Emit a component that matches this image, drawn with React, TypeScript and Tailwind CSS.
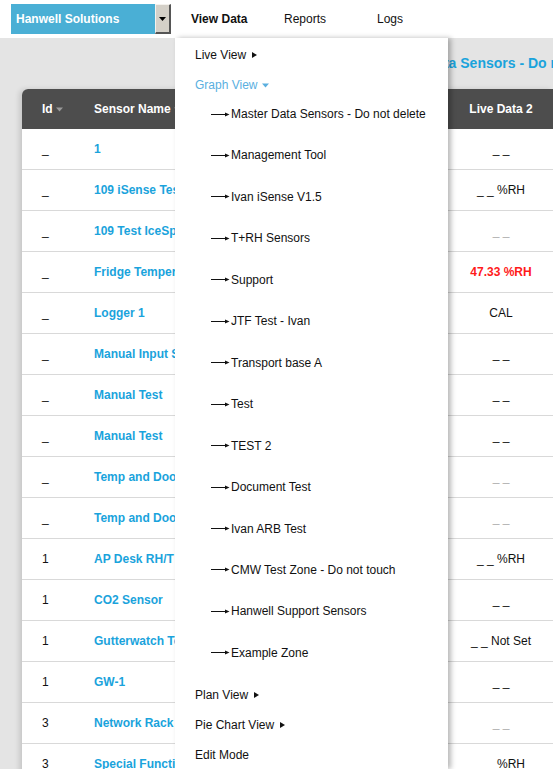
import React from 'react';

type Row = {
  id: string;
  name: string;
  live: string;
  tone?: 'muted' | 'alert';
};

const rows: Row[] = [
  { id: '_', name: '1', live: '_ _' },
  { id: '_', name: '109 iSense Test', live: '_ _ %RH' },
  { id: '_', name: '109 Test IceSpy', live: '_ _', tone: 'muted' },
  { id: '_', name: 'Fridge Temperature', live: '47.33 %RH', tone: 'alert' },
  { id: '_', name: 'Logger 1', live: 'CAL' },
  { id: '_', name: 'Manual Input Sensor', live: '_ _' },
  { id: '_', name: 'Manual Test', live: '_ _' },
  { id: '_', name: 'Manual Test', live: '_ _' },
  { id: '_', name: 'Temp and Door Sensor', live: '_ _', tone: 'muted' },
  { id: '_', name: 'Temp and Door Sensor', live: '_ _', tone: 'muted' },
  { id: '1', name: 'AP Desk RH/T Sensor', live: '_ _ %RH' },
  { id: '1', name: 'CO2 Sensor', live: '_ _' },
  { id: '1', name: 'Gutterwatch Test', live: '_ _ Not Set' },
  { id: '1', name: 'GW-1', live: '_ _' },
  { id: '3', name: 'Network Rack', live: '_ _', tone: 'muted' },
  { id: '3', name: 'Special Function', live: '_ _ %RH' },
];

const zones = [
  'Master Data Sensors - Do not delete',
  'Management Tool',
  'Ivan iSense V1.5',
  'T+RH Sensors',
  'Support',
  'JTF Test - Ivan',
  'Transport base A',
  'Test',
  'TEST 2',
  'Document Test',
  'Ivan ARB Test',
  'CMW Test Zone - Do not touch',
  'Hanwell Support Sensors',
  'Example Zone',
];

const SortCaret = () => (
  <svg width="7" height="5" viewBox="0 0 7 5" className="ml-[3px] inline-block">
    <path d="M0 0.5h7L3.5 4.5z" fill="#9a9a9a" />
  </svg>
);

const RightCaret = () => (
  <svg width="5" height="6" viewBox="0 0 5 6" className="ml-[6px] inline-block">
    <path d="M0 0l5 3-5 3z" fill="#111" />
  </svg>
);

const LongArrow = () => (
  <svg width="19" height="7" viewBox="0 0 19 7" className="mr-[1px] shrink-0">
    <line x1="0" y1="3.5" x2="15" y2="3.5" stroke="#111" strokeWidth="1" />
    <path d="M14 1.5L18.5 3.5L14 5.5z" fill="#111" />
  </svg>
);

const liveClass = (tone?: Row['tone']) => {
  switch (tone) {
    case 'muted':
      return 'text-[#b0b0b0]';
    case 'alert':
      return 'text-[#ff1a1a] font-bold';
    default:
      return 'text-[#111]';
  }
};

const ViewDataMenu: React.FC = () => (
  <div className="absolute left-[175px] top-[38px] bottom-0 w-[273px] bg-white pt-[1px] shadow-[3px_0_5px_rgba(0,0,0,0.28)] text-[12px] text-[#111]">
    <div className="h-[31px] flex items-center pl-[20px]">
      Live View <RightCaret />
    </div>
    <div className="h-[30px] flex items-center pl-[20px] text-[#5aafdf]">
      Graph View
      <svg width="7" height="5" viewBox="0 0 7 5" className="ml-[5px] inline-block">
        <path d="M0 0.5h7L3.5 4.5z" fill="#5aafdf" />
      </svg>
    </div>
    <ul>
      {zones.map((zone) => (
        <li key={zone} className="h-[41.46px] pt-[7px] pl-[36px]">
          <div className="h-[14px] flex items-center whitespace-nowrap">
            <LongArrow />
            {zone}
          </div>
        </li>
      ))}
    </ul>
    <div className="h-[30px] flex items-center pl-[20px]">
      Plan View <RightCaret />
    </div>
    <div className="h-[30px] flex items-center pl-[20px]">
      Pie Chart View <RightCaret />
    </div>
    <div className="h-[30px] flex items-center pl-[20px]">Edit Mode</div>
  </div>
);

export default function App() {
  return (
    <div className="relative w-[553px] h-[769px] overflow-hidden bg-[#e4e4e4] font-['Liberation_Sans',Arial,sans-serif] text-[12px]">
      {/* Top bar */}
      <header className="h-[38px] bg-white flex items-center">
        <div className="ml-[11px] w-[160px] h-[30px] flex">
          <div className="flex-1 bg-[#4aafd5] text-white font-bold flex items-center pl-[5px]">
            Hanwell Solutions
          </div>
          <div className="w-[16px] bg-[#d4d0c8] border-t border-l border-t-[#f4f2ee] border-l-[#f4f2ee] border-r-2 border-b-2 border-r-[#555] border-b-[#555] flex items-center justify-center">
            <svg width="7" height="4" viewBox="0 0 7 4">
              <path d="M0 0h7L3.5 4z" fill="#000" />
            </svg>
          </div>
        </div>
        <nav className="ml-[4px] flex text-[#111]">
          <div className="w-[93px] pl-[16px] font-bold">View Data</div>
          <div className="w-[93px] pl-[16px]">Reports</div>
          <div className="w-[93px] pl-[16px]">Logs</div>
        </nav>
      </header>

      {/* Page title */}
      <div className="h-[51px] flex items-center pl-[377px] whitespace-nowrap text-[14px] font-bold text-[#1aa3dc]">
        Master Data Sensors - Do not delete
      </div>

      {/* Sensor table */}
      <div className="ml-[22px] w-[531px] bg-white shadow-[-3px_0_5px_rgba(0,0,0,0.12)] rounded-tl-[6px]">
        <div className="h-[40px] bg-[#4d4d4d] rounded-tl-[6px] grid grid-cols-[58px_1fr_104px] items-center text-white font-bold">
          <div className="pl-[20px] flex items-center">
            Id <SortCaret />
          </div>
          <div className="pl-[14px] flex items-center">
            Sensor Name <SortCaret />
          </div>
          <div className="text-center">Live Data 2</div>
        </div>
        {rows.map((row, i) => (
          <div
            key={i}
            className="h-[41px] border-b border-[#d9d9d9] grid grid-cols-[58px_1fr_104px] items-center"
          >
            <div className="pl-[20px] text-[#111]">{row.id}</div>
            <div className="pl-[14px] font-bold text-[#1aa3dc] whitespace-nowrap overflow-hidden">
              {row.name}
            </div>
            <div className={`text-center whitespace-nowrap ${liveClass(row.tone)}`}>{row.live}</div>
          </div>
        ))}
      </div>

      <ViewDataMenu />
    </div>
  );
}
